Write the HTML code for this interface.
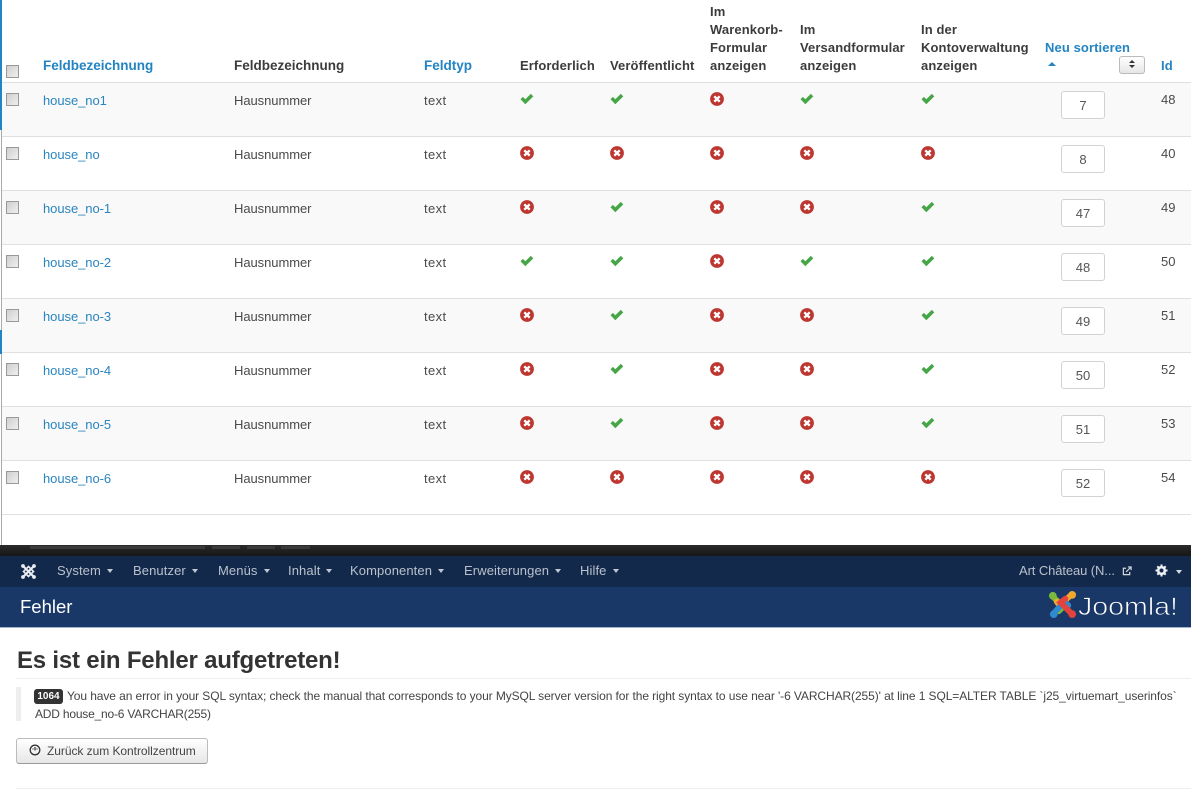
<!DOCTYPE html>
<html lang="de"><head><meta charset="utf-8"><title>Fehler</title>
<style>
html,body{margin:0;padding:0;background:#fff}
body{width:1191px;height:810px;position:relative;overflow:hidden;font-family:"Liberation Sans",Arial,sans-serif;font-size:12px;color:#333}
div,span,a{position:absolute;white-space:nowrap}
.th{font-weight:bold;font-size:13px;line-height:18px;color:#3c3c3c;letter-spacing:.1px}
.wide{font-size:13.5px;letter-spacing:0}
.bl{color:#2384c4}
.row{left:2px;width:1189px;height:53px;border-bottom:1px solid #e0e0e0}
.row.s{background:#f9f9f9}
.t{font-size:13px;line-height:16px;letter-spacing:-.06px;color:#4a4a4a;top:10px}
.l{left:41px;color:#2a85c0}
.h{left:232px}.ty{left:422px;letter-spacing:.4px}
.id{left:1159px;letter-spacing:0;font-size:13px;top:9px}
.cb{left:4px;top:10px;width:11px;height:11px;border:1px solid #999;background:linear-gradient(135deg,#cfcfcf,#efefef)}
.in{left:1059px;top:8px;width:42px;height:26px;border:1px solid #d2d2d2;border-radius:3px;background:#fff;text-align:center;line-height:28px;color:#555;font-size:13px}
svg{position:absolute;overflow:visible}
.i{top:9px;width:14px;height:14px}
.a{left:518px}.b{left:608px}.c{left:708px}.d{left:798px}.e{left:919px}
.m{top:563px;line-height:16px;font-size:13px;color:#b9c1cc;letter-spacing:.1px}
.m i{display:inline-block;width:0;height:0;border-left:3.5px solid transparent;border-right:3.5px solid transparent;border-top:4px solid #c2c9d3;margin-left:6px;vertical-align:2px}
</style></head><body>
<svg width="0" height="0" style="position:absolute"><defs>
<symbol id="ok" viewBox="0 0 14 14"><path d="M0.500 7.300L2.900 4.900L5.300 7.300L10.800 1.900L13.300 4.400L5.300 12.300Z" fill="#46a546"/></symbol>
<symbol id="no" viewBox="0 0 14 14"><circle cx="7" cy="7" r="6.900" fill="#bd362f"/><path d="M4.300 4.300L9.700 9.700M9.700 4.300L4.300 9.700" stroke="#fff" stroke-width="2.400"/></symbol>
</defs></svg>

<div style="left:0;top:0;width:2px;height:130px;background:#2384c4"></div>
<div style="left:1px;top:130px;width:1px;height:415px;background:#aaa"></div>
<div style="left:0;top:330px;width:2px;height:24px;background:#2384c4"></div>

<div class="th" style="left:710px;top:3px">Im</div>
<div class="th" style="left:710px;top:21px">Warenkorb-</div>
<div class="th" style="left:710px;top:39px">Formular</div>
<div class="th" style="left:710px;top:57px">anzeigen</div>
<div class="th" style="left:800px;top:21px">Im</div>
<div class="th" style="left:800px;top:39px">Versandformular</div>
<div class="th" style="left:800px;top:57px">anzeigen</div>
<div class="th" style="left:921px;top:21px">In der</div>
<div class="th" style="left:921px;top:39px">Kontoverwaltung</div>
<div class="th" style="left:921px;top:57px">anzeigen</div>
<div class="th bl" style="left:1045px;top:39px">Neu sortieren</div>
<div style="left:1048px;top:62px;width:0;height:0;border-left:4px solid transparent;border-right:4px solid transparent;border-bottom:4px solid #2384c4"></div>
<div style="left:1119px;top:56px;width:24px;height:16px;border:1px solid #bbb;border-radius:3px;background:linear-gradient(#fff,#e6e6e6)"></div>
<div style="left:1129px;top:60px;width:0;height:0;border-left:3px solid transparent;border-right:3px solid transparent;border-bottom:3px solid #333"></div>
<div style="left:1129px;top:65px;width:0;height:0;border-left:3px solid transparent;border-right:3px solid transparent;border-top:3px solid #333"></div>
<div class="th bl" style="left:1161px;top:57px">Id</div>
<div class="cb" style="left:6px;top:65px"></div>
<div class="th bl wide" style="left:43px;top:57px">Feldbezeichnung</div>
<div class="th wide" style="left:234px;top:57px">Feldbezeichnung</div>
<div class="th bl wide" style="left:424px;top:57px">Feldtyp</div>
<div class="th" style="left:520px;top:57px">Erforderlich</div>
<div class="th" style="left:610px;top:57px">Veröffentlicht</div>
<div style="left:2px;top:82px;width:1189px;height:1px;background:#e0e0e0"></div>

<div class="row s" style="top:83px"><div class="cb"></div><span class="t l">house_no1</span><span class="t h">Hausnummer</span><span class="t ty">text</span>
<svg class="i a"><use href="#ok"/></svg><svg class="i b"><use href="#ok"/></svg><svg class="i c"><use href="#no"/></svg><svg class="i d"><use href="#ok"/></svg><svg class="i e"><use href="#ok"/></svg>
<div class="in">7</div><span class="t id">48</span></div>

<div class="row" style="top:137px"><div class="cb"></div><span class="t l">house_no</span><span class="t h">Hausnummer</span><span class="t ty">text</span>
<svg class="i a"><use href="#no"/></svg><svg class="i b"><use href="#no"/></svg><svg class="i c"><use href="#no"/></svg><svg class="i d"><use href="#no"/></svg><svg class="i e"><use href="#no"/></svg>
<div class="in">8</div><span class="t id">40</span></div>

<div class="row s" style="top:191px"><div class="cb"></div><span class="t l">house_no-1</span><span class="t h">Hausnummer</span><span class="t ty">text</span>
<svg class="i a"><use href="#no"/></svg><svg class="i b"><use href="#ok"/></svg><svg class="i c"><use href="#no"/></svg><svg class="i d"><use href="#no"/></svg><svg class="i e"><use href="#ok"/></svg>
<div class="in">47</div><span class="t id">49</span></div>

<div class="row" style="top:245px"><div class="cb"></div><span class="t l">house_no-2</span><span class="t h">Hausnummer</span><span class="t ty">text</span>
<svg class="i a"><use href="#ok"/></svg><svg class="i b"><use href="#ok"/></svg><svg class="i c"><use href="#no"/></svg><svg class="i d"><use href="#ok"/></svg><svg class="i e"><use href="#ok"/></svg>
<div class="in">48</div><span class="t id">50</span></div>

<div class="row s" style="top:299px"><div class="cb"></div><span class="t l">house_no-3</span><span class="t h">Hausnummer</span><span class="t ty">text</span>
<svg class="i a"><use href="#no"/></svg><svg class="i b"><use href="#ok"/></svg><svg class="i c"><use href="#no"/></svg><svg class="i d"><use href="#no"/></svg><svg class="i e"><use href="#ok"/></svg>
<div class="in">49</div><span class="t id">51</span></div>

<div class="row" style="top:353px"><div class="cb"></div><span class="t l">house_no-4</span><span class="t h">Hausnummer</span><span class="t ty">text</span>
<svg class="i a"><use href="#no"/></svg><svg class="i b"><use href="#ok"/></svg><svg class="i c"><use href="#no"/></svg><svg class="i d"><use href="#no"/></svg><svg class="i e"><use href="#ok"/></svg>
<div class="in">50</div><span class="t id">52</span></div>

<div class="row s" style="top:407px"><div class="cb"></div><span class="t l">house_no-5</span><span class="t h">Hausnummer</span><span class="t ty">text</span>
<svg class="i a"><use href="#no"/></svg><svg class="i b"><use href="#ok"/></svg><svg class="i c"><use href="#no"/></svg><svg class="i d"><use href="#no"/></svg><svg class="i e"><use href="#ok"/></svg>
<div class="in">51</div><span class="t id">53</span></div>

<div class="row" style="top:461px"><div class="cb"></div><span class="t l">house_no-6</span><span class="t h">Hausnummer</span><span class="t ty">text</span>
<svg class="i a"><use href="#no"/></svg><svg class="i b"><use href="#no"/></svg><svg class="i c"><use href="#no"/></svg><svg class="i d"><use href="#no"/></svg><svg class="i e"><use href="#no"/></svg>
<div class="in">52</div><span class="t id">54</span></div>

<div style="left:0;top:545px;width:1191px;height:11px;background:linear-gradient(#2b2b2b,#161616)"></div>
<div style="left:30px;top:546px;width:175px;height:3px;background:#3a3a3a"></div>
<div style="left:212px;top:546px;width:28px;height:3px;background:#3a3a3a"></div>
<div style="left:247px;top:546px;width:28px;height:3px;background:#3a3a3a"></div>
<div style="left:281px;top:546px;width:29px;height:3px;background:#3a3a3a"></div>
<div style="left:0;top:556px;width:1191px;height:31px;background:#13294b"></div>
<div style="left:0;top:587px;width:1191px;height:40px;background:#1a3867;border-bottom:1px solid #9fb3cf"></div>

<svg style="left:20px;top:563px" width="17" height="17" viewBox="0 0 17 17"><g stroke="#e8ebef" stroke-width="2.200" fill="none"><path d="M3 3L14 14M14 3L3 14"/><path d="M8.500 3.500L13.500 8.500L8.500 13.500L3.500 8.500Z" stroke-width="1.600"/></g><g fill="#e8ebef"><circle cx="3" cy="3" r="1.900"/><circle cx="14" cy="3" r="1.900"/><circle cx="3" cy="14" r="1.900"/><circle cx="14" cy="14" r="1.900"/></g></svg>
<span class="m" style="left:57px">System<i></i></span>
<span class="m" style="left:133px">Benutzer<i></i></span>
<span class="m" style="left:218px">Menüs<i></i></span>
<span class="m" style="left:288px">Inhalt<i></i></span>
<span class="m" style="left:350px">Komponenten<i></i></span>
<span class="m" style="left:464px">Erweiterungen<i></i></span>
<span class="m" style="left:580px">Hilfe<i></i></span>
<span class="m" style="left:1019px;letter-spacing:-.1px">Art Château (N...</span>
<svg style="left:1122px;top:566px" width="10" height="10" viewBox="0 0 11 11"><path d="M8.500 6.500V9.500H1.500V2.500H4.500" fill="none" stroke="#d5dae1" stroke-width="1.300"/><path d="M4.500 6.500L9.500 1.500M6.500 1H10V4.500" fill="none" stroke="#d5dae1" stroke-width="1.300"/></svg>
<svg style="left:1155px;top:564px" width="13" height="13" viewBox="0 0 13 13"><circle cx="6.500" cy="6.500" r="3.300" fill="none" stroke="#eef0f3" stroke-width="2.600"/><path d="M6.500 0.500V12.500M0.500 6.500H12.500M2.300 2.300L10.700 10.700M10.700 2.300L2.300 10.700" stroke="#eef0f3" stroke-width="2" stroke-dasharray="2.500 7 2.500 0"/></svg>
<div style="left:1176px;top:570px;width:0;height:0;border-left:3.500px solid transparent;border-right:3.500px solid transparent;border-top:4px solid #d5dae1"></div>

<span style="left:20px;top:595px;font-size:18.500px;line-height:24px;color:#fff">Fehler</span>

<svg style="left:1048px;top:590px" width="29" height="29" viewBox="0 0 30 30">
<g fill="none" stroke-width="6" stroke-linecap="round">
<path d="M5 7L16 17L11 22" stroke="#7ab93d"/>
<path d="M24 5L12 16L9 12" stroke="#f2a72e"/>
<path d="M6 24L17 12L21 16" stroke="#2f8ad0"/>
<path d="M25 25L13 13L18 9" stroke="#e2433c"/>
</g>
<circle cx="5" cy="6" r="4" fill="#7ab93d"/><circle cx="25" cy="5" r="4" fill="#f2a72e"/><circle cx="6" cy="25" r="4" fill="#2f8ad0"/><circle cx="25" cy="25" r="4" fill="#e2433c"/>
</svg>
<svg style="left:1078px;top:591px" width="105" height="32"><text x="0" y="24" font-family="Liberation Sans" font-size="25" fill="#fff" stroke="#1a3867" stroke-width=".7" textLength="100" lengthAdjust="spacingAndGlyphs">Joomla!</text></svg>

<div style="left:17px;top:646px;font-size:24px;line-height:30px;font-weight:bold;color:#333;letter-spacing:-.2px">Es ist ein Fehler aufgetreten!</div>
<div style="left:16px;top:678px;width:1175px;height:1px;background:#eee"></div>
<div style="left:16px;top:687px;width:5px;height:34px;background:#eee"></div>
<div style="left:34px;top:689px;width:29px;height:15px;background:#333;border-radius:3px;color:#fff;font-size:10px;font-weight:bold;line-height:15px;text-align:center">1064</div>
<div style="left:67px;top:688px;font-size:12px;line-height:16px;letter-spacing:-.09px;color:#444">You have an error in your SQL syntax; check the manual that corresponds to your MySQL server version for the right syntax to use near '-6 VARCHAR(255)' at line 1 SQL=ALTER TABLE `j25_virtuemart_userinfos`</div>
<div style="left:35px;top:706px;font-size:12px;line-height:16px;letter-spacing:-.2px;color:#444">ADD house_no-6 VARCHAR(255)</div>

<div style="left:16px;top:738px;width:190px;height:24px;border:1px solid #bbb;border-bottom-color:#999;border-radius:3px;background:linear-gradient(#fff,#e6e6e6)"></div>
<svg style="left:29px;top:744px" width="12" height="12" viewBox="0 0 12 12"><circle cx="6" cy="6" r="4.800" fill="none" stroke="#333" stroke-width="1.300"/><path d="M6 3V6.500M4 4.500V5.500M8 4.500V5.500" stroke="#333" stroke-width="1.200"/></svg>
<span style="left:47px;top:743px;font-size:12px;line-height:16px;color:#444;letter-spacing:-.05px">Zurück zum Kontrollzentrum</span>
<div style="left:16px;top:788px;width:1175px;height:1px;background:#eee"></div>
</body></html>
